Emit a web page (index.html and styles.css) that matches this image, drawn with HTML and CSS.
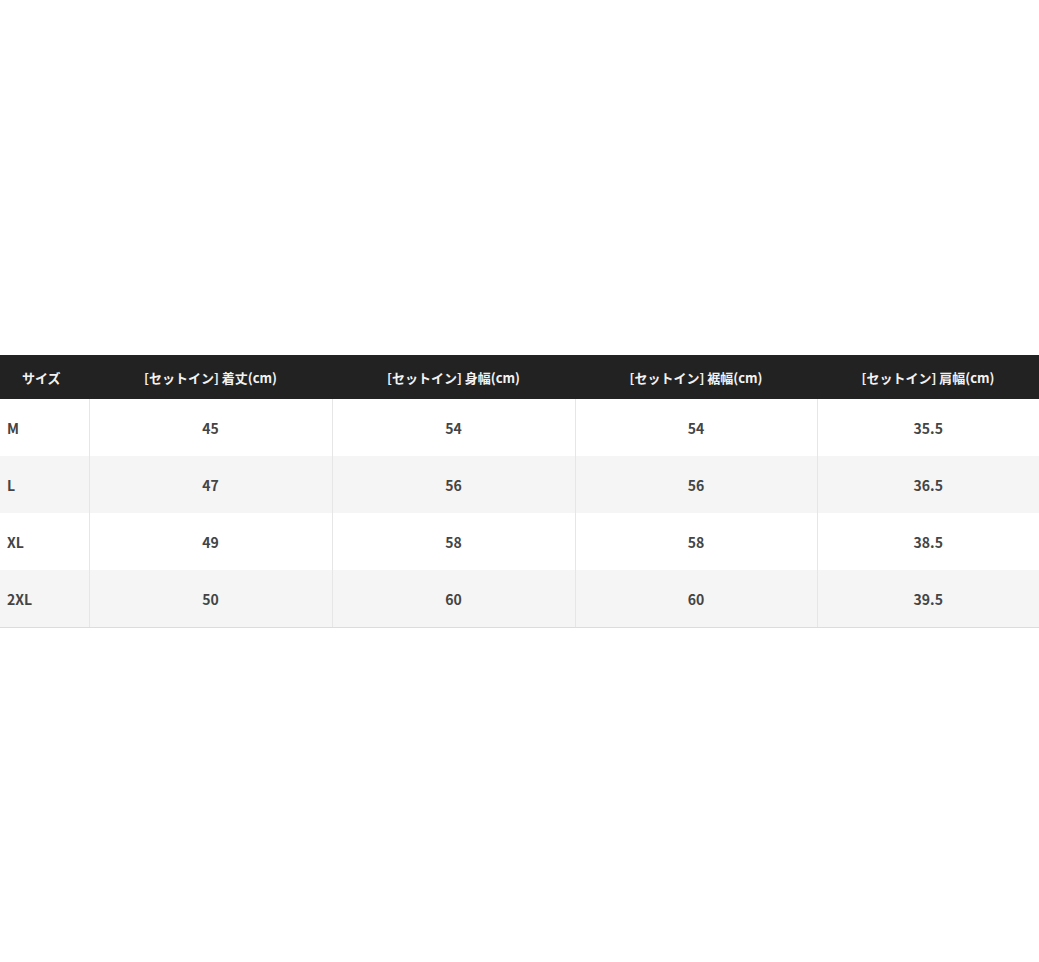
FILE: index.html
```html
<!DOCTYPE html>
<html lang="ja">
<head>
<meta charset="utf-8">
<link rel="stylesheet" href="styles.css">
</head>
<body>
<div class="page">
  <table class="size-table">
    <colgroup>
      <col class="c-size">
      <col class="c-a">
      <col class="c-b">
      <col class="c-c">
      <col class="c-d">
    </colgroup>
    <thead>
      <tr>
        <th class="first">サイズ</th>
        <th>[セットイン] 着丈(cm)</th>
        <th>[セットイン] 身幅(cm)</th>
        <th>[セットイン] 裾幅(cm)</th>
        <th>[セットイン] 肩幅(cm)</th>
      </tr>
    </thead>
    <tbody>
      <tr><td class="first">M</td><td>45</td><td>54</td><td>54</td><td>35.5</td></tr>
      <tr><td class="first">L</td><td>47</td><td>56</td><td>56</td><td>36.5</td></tr>
      <tr><td class="first">XL</td><td>49</td><td>58</td><td>58</td><td>38.5</td></tr>
      <tr><td class="first">2XL</td><td>50</td><td>60</td><td>60</td><td>39.5</td></tr>
    </tbody>
  </table>
</div>
</body>
</html>
```
FILE: styles.css
```css
html, body {
  margin: 0;
  padding: 0;
  background: #fff;
}
.page {
  padding-top: 355px;
  width: 1039px;
  overflow: hidden;
}
.size-table {
  width: 1039px;
  table-layout: fixed;
  border-collapse: collapse;
  font-family: "Noto Sans CJK JP", "Noto Sans", sans-serif;
  font-weight: 700;
}
.c-size { width: 89px; }
.c-a { width: 243px; }
.c-b { width: 243px; }
.c-c { width: 242px; }
.c-d { width: 222px; }
.size-table th {
  background: #222;
  color: #f2f2f2;
  font-size: 13px;
  height: 44px;
  padding: 0;
  text-align: center;
  font-weight: 700;
}
.size-table th.first {
  text-align: left;
  padding-left: 22px;
}
.size-table td {
  height: 57px;
  padding: 0;
  font-size: 14px;
  color: #444;
  text-align: center;
  border-left: 1px solid #e6e6e6;
}
.size-table td.first {
  text-align: left;
  padding-left: 7px;
  border-left: none;
}
.size-table tbody tr:nth-child(even) td {
  background: #f5f5f5;
}
.size-table tbody tr:last-child td {
  border-bottom: 1px solid #dcdcdc;
}
```
